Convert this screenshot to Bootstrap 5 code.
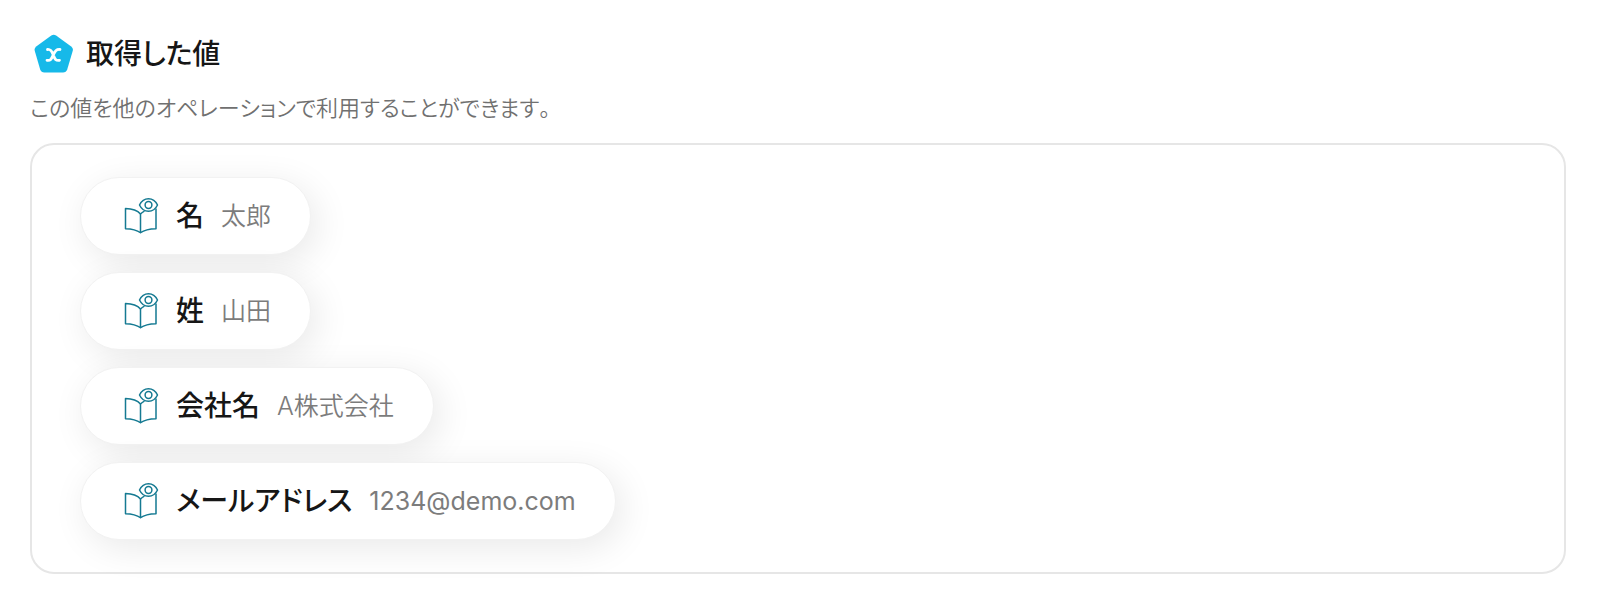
<!DOCTYPE html>
<html lang="ja">
<head>
<meta charset="utf-8">
<meta name="viewport" content="width=device-width, initial-scale=1">
<title>取得した値</title>
<link href="https://cdn.jsdelivr.net/npm/bootstrap@5.3.0/dist/css/bootstrap.min.css" rel="stylesheet">
<style>
  body { font-family: Inter, "Noto Sans CJK JP", sans-serif; font-feature-settings: "palt"; font-kerning: none; color: #161616; background: #fff; }
  .page { padding: 33px 34px 20px 30px; }
  .title { font-size: 28px; line-height: 42px; font-weight: 500; }
  .title-row { gap: 12px; }
  .note { font-size: 22px; line-height: 34px; color: #707070; font-weight: 350; }
  .panel { border: 2px solid #e6e6e6; border-radius: 24px; padding: 32px 48px; margin-top: 18px; }
  .pill { height: 78px; padding: 0 39px 0 42px; border: 1px solid #f2f2f2; background: #fff; box-shadow: 6px 8px 36px rgba(0, 0, 0, .09); }
  .pill-icon { margin-right: 17px; }
  .pill-name { font-size: 28px; line-height: 40px; font-weight: 500; margin-right: 17px; }
  .pill-value { font-size: 25px; line-height: 40px; color: #7c7c7c; font-weight: 350; }
  .pill-value.latin { font-weight: 400; }
  .values { gap: 17px; }
</style>
</head>
<body>
<svg class="d-none" aria-hidden="true">
  <symbol id="book-eye" viewBox="0 0 36 40">
    <g fill="none" stroke="#157a92" stroke-width="1.5" stroke-linejoin="round" stroke-linecap="round">
      <path d="M17.500 18C14.500 14.500 9.500 12.700 2.500 12.500V32.800C9 33 14 34.300 17.500 36.700C21 34.300 26 33 33 32.800V13"/>
      <path d="M17.500 36.500V18C18.700 16.800 19.700 16 21 15.300"/>
      <path d="M16.500 9C18.500 4.800 21.800 2.700 25.500 2.700S32.500 4.800 34.500 9C32.500 13.200 29.200 15.300 25.500 15.300S18.500 13.200 16.500 9Z"/>
      <circle cx="25.500" cy="9" r="3.400"/>
    </g>
  </symbol>
</svg>
<main class="page">
  <header class="title-row d-flex align-items-center mb-3">
    <svg class="ms-1" width="40" height="40" viewBox="0 0 40 40" aria-hidden="true">
      <path fill="#16b9e9" d="M17.300 1.400Q19.700 -.1 22.100 1.400L37.200 12.400Q39.500 14.200 38.700 17L33.200 35.500Q32.200 38.500 29 38.500H10.400Q7.200 38.500 6.200 35.500L.8 17Q0 14.200 2.200 12.400Z"/>
      <path fill="none" stroke="#fff" stroke-width="2.800" stroke-linecap="round" stroke-linejoin="round" d="M13.500 15.500C16.500 15.200 17.700 16.600 19.300 20.900S21.700 26.800 25.500 26.300M26 15.500C22.500 15.200 21.300 16.600 19.300 20.900S16.500 26.800 13 26.300"/>
    </svg>
    <h1 class="title mb-0">取得した値</h1>
  </header>
  <p class="note mb-0">この値を他のオペレーションで利用することができます。</p>
  <section class="panel">
    <ul class="values list-unstyled d-flex flex-column align-items-start mb-0">
      <li class="pill rounded-pill d-inline-flex align-items-center">
        <svg class="pill-icon" width="36" height="40" aria-hidden="true"><use href="#book-eye"/></svg>
        <span class="pill-name">名</span><span class="pill-value">太郎</span>
      </li>
      <li class="pill rounded-pill d-inline-flex align-items-center">
        <svg class="pill-icon" width="36" height="40" aria-hidden="true"><use href="#book-eye"/></svg>
        <span class="pill-name">姓</span><span class="pill-value">山田</span>
      </li>
      <li class="pill rounded-pill d-inline-flex align-items-center">
        <svg class="pill-icon" width="36" height="40" aria-hidden="true"><use href="#book-eye"/></svg>
        <span class="pill-name">会社名</span><span class="pill-value">A株式会社</span>
      </li>
      <li class="pill rounded-pill d-inline-flex align-items-center">
        <svg class="pill-icon" width="36" height="40" aria-hidden="true"><use href="#book-eye"/></svg>
        <span class="pill-name">メールアドレス</span><span class="pill-value latin">1234@demo.com</span>
      </li>
    </ul>
  </section>
</main>
<script src="https://cdn.jsdelivr.net/npm/bootstrap@5.3.0/dist/js/bootstrap.bundle.min.js"></script>
</body>
</html>
